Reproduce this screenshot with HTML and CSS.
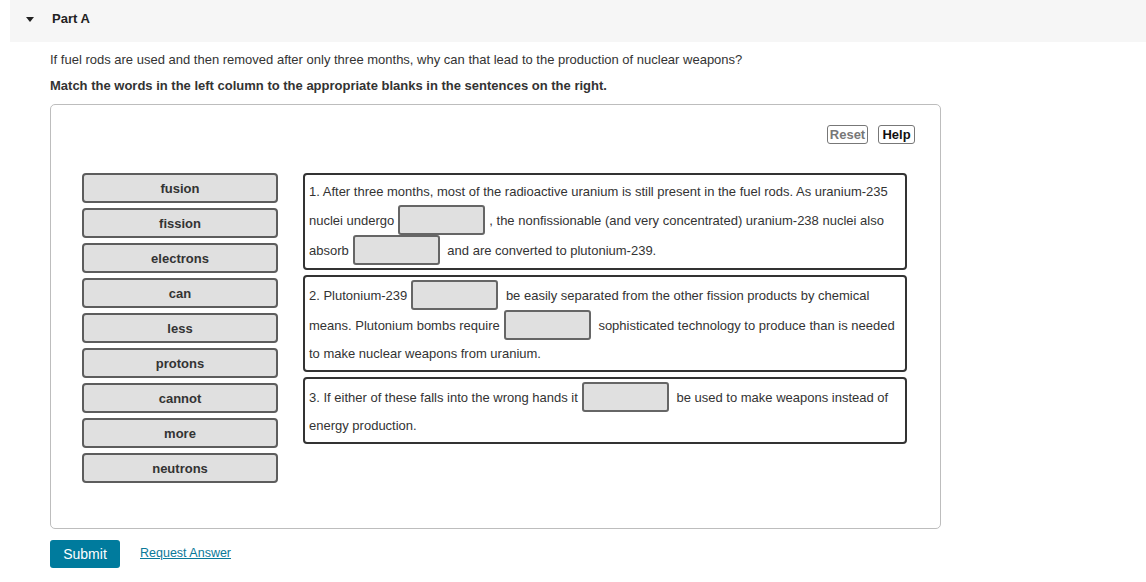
FILE: index.html
```html
<!DOCTYPE html>
<html lang="en">
<head>
<meta charset="utf-8">
<title>Part A</title>
<link rel="stylesheet" href="styles.css">
</head>
<body>
<div class="part-header">
  <span class="caret"></span>
  <span class="part-title">Part A</span>
</div>
<div class="content">
  <p class="question">If fuel rods are used and then removed after only three months, why can that lead to the production of nuclear weapons?</p>
  <p class="instruction">Match the words in the left column to the appropriate blanks in the sentences on the right.</p>
  <div class="panel">
    <div class="tools">
      <button class="tool-btn reset">Reset</button>
      <button class="tool-btn help">Help</button>
    </div>
    <div class="match">
      <div class="words">
        <div class="tile">fusion</div>
        <div class="tile">fission</div>
        <div class="tile">electrons</div>
        <div class="tile">can</div>
        <div class="tile">less</div>
        <div class="tile">protons</div>
        <div class="tile">cannot</div>
        <div class="tile">more</div>
        <div class="tile">neutrons</div>
      </div>
      <div class="sentences">
        <div class="sentence">1. After three months, most of the radioactive uranium is still present in the fuel rods. As uranium-235 nuclei undergo<span class="blank"></span>, the nonfissionable (and very concentrated) uranium-238 nuclei also absorb<span class="blank"></span> and are converted to plutonium-239.</div>
        <div class="sentence">2. Plutonium-239<span class="blank"></span> be easily separated from the other fission products by chemical means. Plutonium bombs require<span class="blank"></span> sophisticated technology to produce than is needed to make nuclear weapons from uranium.</div>
        <div class="sentence">3. If either of these falls into the wrong hands it<span class="blank"></span> be used to make weapons instead of energy production.</div>
      </div>
    </div>
  </div>
  <div class="actions">
    <button class="submit">Submit</button>
    <a class="request" href="#">Request Answer</a>
  </div>
</div>
</body>
</html>
```
FILE: styles.css
```css
* { box-sizing: border-box; }
body {
  margin: 0;
  font-family: "Liberation Sans", Arial, sans-serif;
  color: #333;
  background: #fff;
}
.part-header {
  margin-left: 10px;
  height: 42px;
  background: #f6f6f6;
  display: flex;
  align-items: flex-start;
  padding: 11px 0 0 16px;
}
.caret {
  width: 0;
  height: 0;
  margin-top: 6px;
  border-left: 4.5px solid transparent;
  border-right: 4.5px solid transparent;
  border-top: 5px solid #222;
}
.part-title {
  margin-left: 18px;
  font-size: 13px;
  line-height: 15px;
  font-weight: bold;
  color: #222;
}
.content {
  padding-left: 50px;
}
.question {
  margin: 10px 0 0;
  font-size: 13px;
  line-height: 16px;
}
.instruction {
  margin: 10px 0 0;
  font-size: 13px;
  line-height: 16px;
  font-weight: bold;
}
.panel {
  margin-top: 10px;
  width: 891px;
  height: 425px;
  border: 1px solid #bdbdbd;
  border-radius: 5px;
  padding: 20px 25px 0 31px;
}
.tools {
  display: flex;
  justify-content: flex-end;
  gap: 10px;
}
.tool-btn {
  font-family: "Liberation Sans", Arial, sans-serif;
  font-size: 13px;
  font-weight: bold;
  line-height: 15px;
  height: 19px;
  padding: 0;
  background: #fff;
  border: 1px solid #777;
  border-radius: 3px;
}
.reset { color: #777; width: 41px; }
.help { color: #111; width: 37px; }
.match {
  display: flex;
  align-items: flex-start;
  gap: 25px;
  margin-top: 28px;
}
.words {
  width: 196px;
  display: flex;
  flex-direction: column;
  gap: 5px;
  margin-top: 1px;
}
.tile {
  height: 30px;
  background: #e0e0e0;
  border: 2px solid #5d5d5d;
  border-radius: 4px;
  font-size: 13px;
  font-weight: bold;
  color: #333;
  display: flex;
  align-items: center;
  justify-content: center;
}
.sentences {
  width: 604px;
  display: flex;
  flex-direction: column;
  gap: 5px;
  margin-top: 1px;
}
.sentence {
  border: 2px solid #333;
  border-radius: 4px;
  padding: 3px 4px 3px 4px;
  font-size: 13px;
  line-height: 27px;
}
.blank {
  display: inline-block;
  vertical-align: -10px;
  width: 87px;
  height: 30px;
  margin: 0 4px;
  background: #e0e0e0;
  border: 2px solid #666;
  border-radius: 3px;
}
.actions {
  margin-top: 11px;
  display: flex;
  align-items: center;
  gap: 20px;
}
.submit {
  width: 70px;
  height: 28px;
  background: #007b9d;
  color: #fff;
  border: none;
  border-radius: 3px;
  font-family: "Liberation Sans", Arial, sans-serif;
  font-size: 14px;
  padding: 0;
}
.request {
  color: #0a7999;
  font-size: 12.5px;
  line-height: 14px;
  margin-top: -2px;
  text-decoration: underline;
}
```
